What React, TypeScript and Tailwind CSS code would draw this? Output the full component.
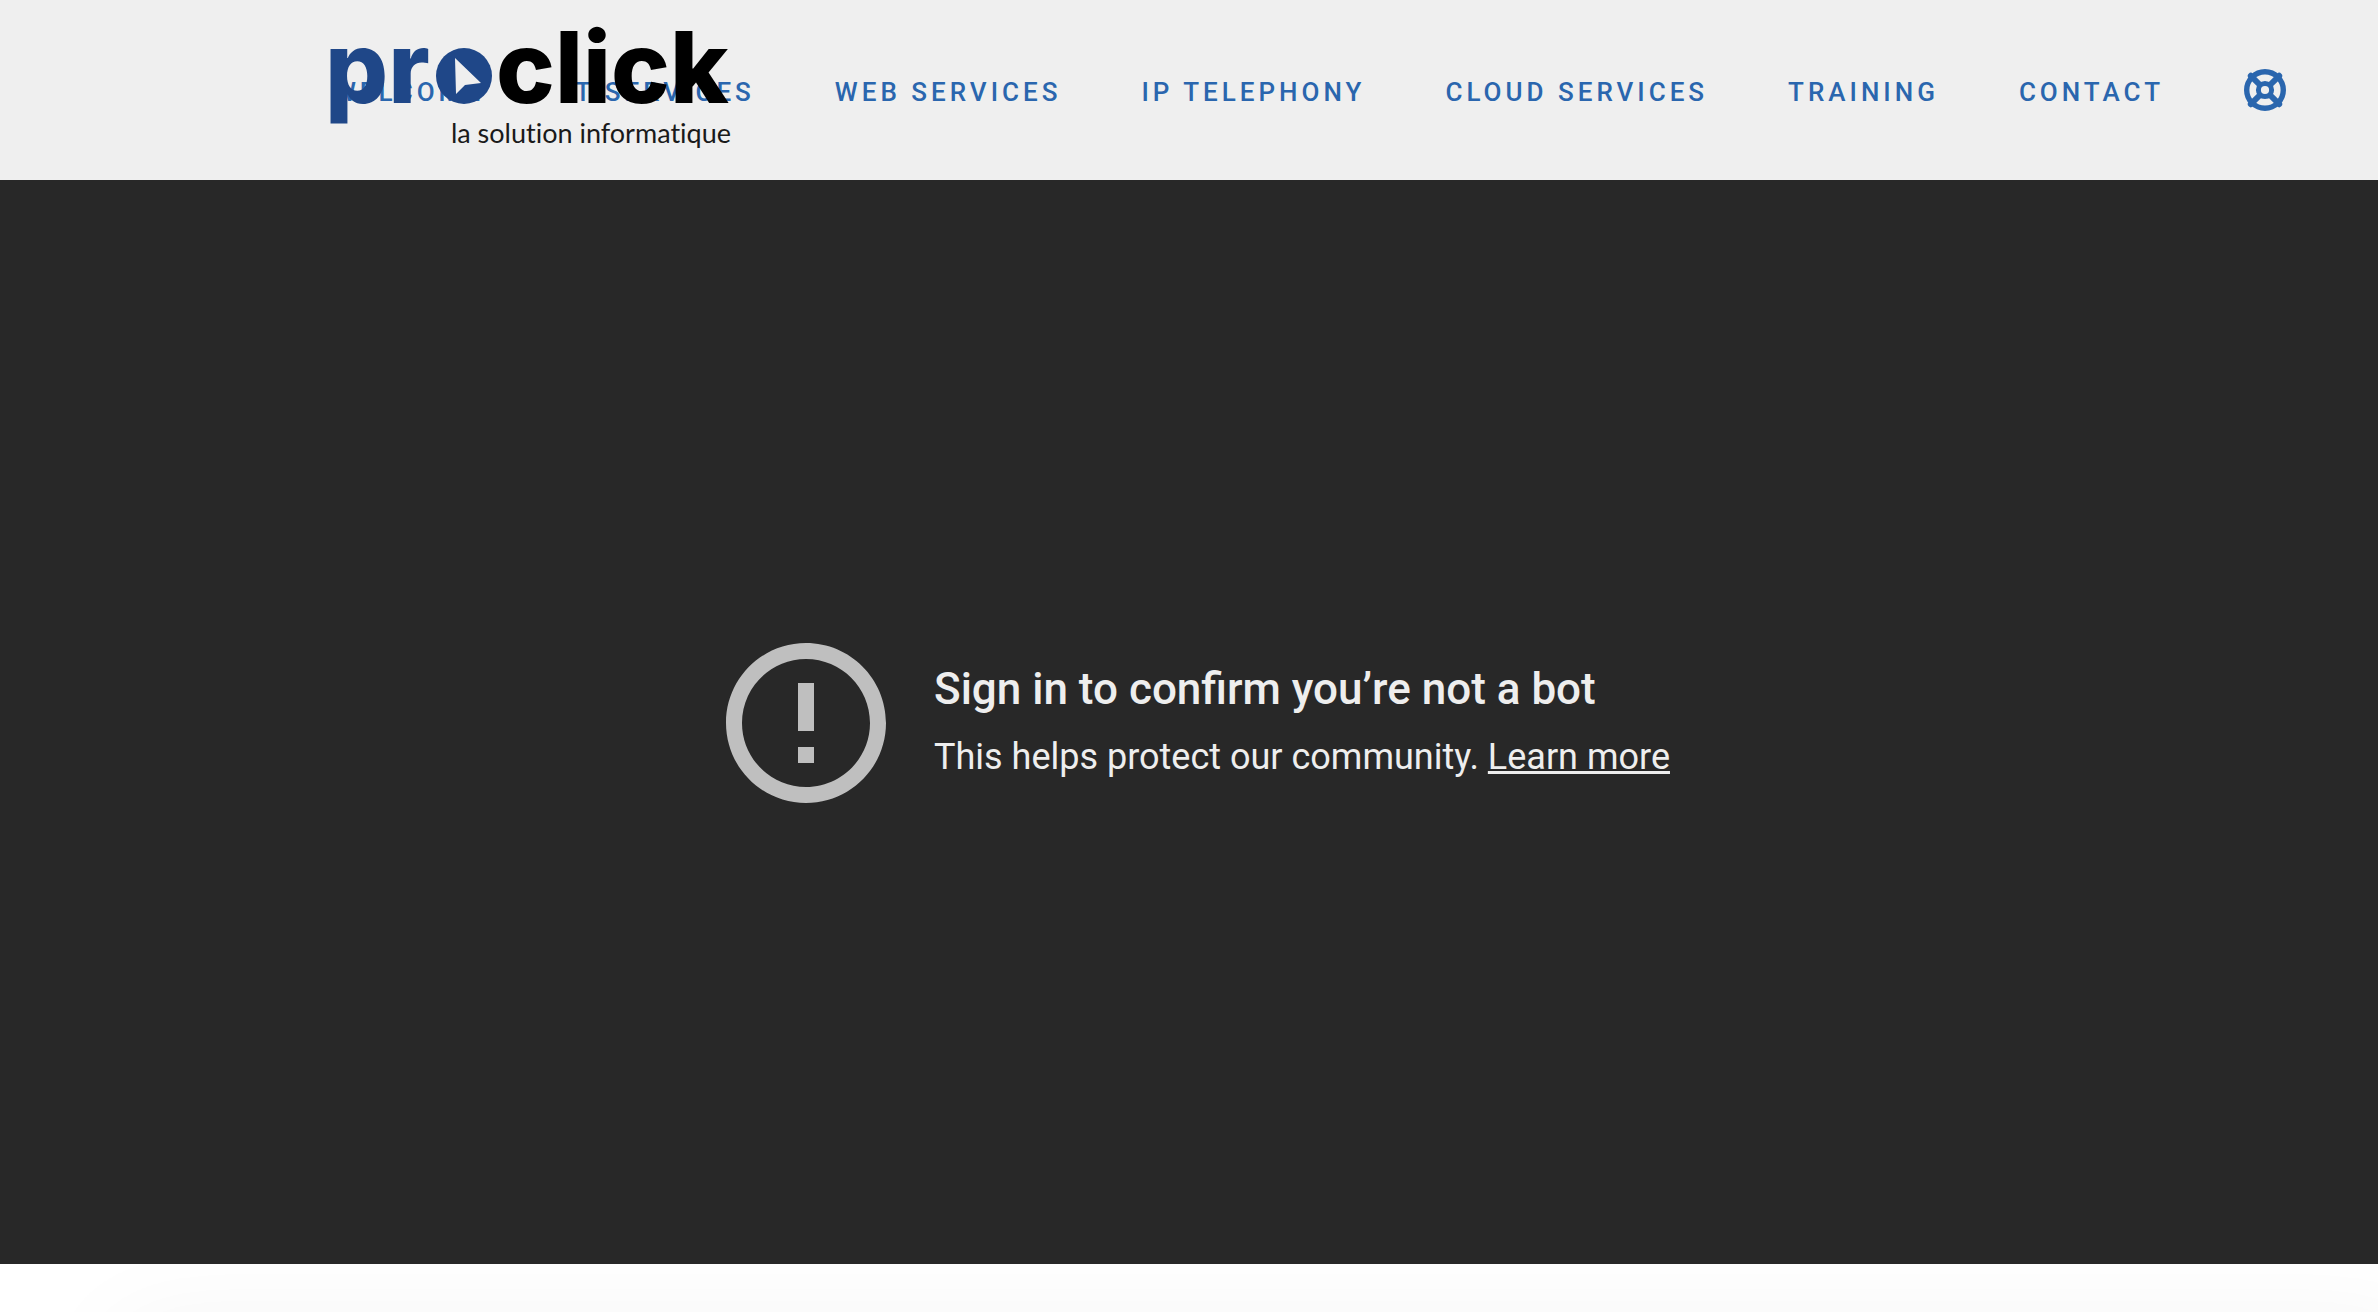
const NAV_ITEMS = [
  "Welcome",
  "IT Services",
  "Web Services",
  "IP Telephony",
  "Cloud Services",
  "Training",
  "Contact",
];

function Logo() {
  return (
    <svg viewBox="0 0 410 150" className="w-[410px] h-[150px] overflow-visible" role="img" aria-label="proclick, la solution informatique">
      <g fontFamily="Inter, sans-serif" fontSize={99} fontWeight={800}>
        <text x={-5} y={93} fill="#1f4788">pr</text>
        <text x={166} y={93} fill="#000">click</text>
      </g>
      {/* The "o": solid disc with a pointer cut out */}
      <circle cx={134} cy={66} r={28} fill="#1f4788" />
      <path d="M125 48 L151 73 L135 75 L126 84 Z" fill="#efefef" />
      <text x={401} y={133} textAnchor="end" fontFamily="Lato, sans-serif" fontSize={27} fill="#1a1a1a" className="[font-variant-ligatures:none]">
        la solution informatique
      </text>
    </svg>
  );
}

function LifeRing() {
  return (
    <svg viewBox="0 0 42 42" className="w-[42px] h-[42px]" fill="none" stroke="currentColor">
      <circle cx={21} cy={21} r={18.3} strokeWidth={5.4} />
      <circle cx={21} cy={21} r={6.6} strokeWidth={5} />
      <path d="M15 15L6.8 6.8M27 15L35.2 6.8M15 27L6.8 35.2M27 27L35.2 35.2" strokeWidth={6} strokeLinecap="round" />
    </svg>
  );
}

function Header() {
  return (
    <header className="relative flex h-[180px] items-center justify-end bg-[#efefef] pr-[92px]">
      <nav className="flex items-center gap-20 text-[26px] font-medium tracking-[4px] whitespace-nowrap text-[#2a66ae] uppercase">
        {NAV_ITEMS.map((item) => (
          <a key={item} href="#" className="pt-1">{item}</a>
        ))}
        <a href="#" aria-label="Support">
          <LifeRing />
        </a>
      </nav>
      {/* Logo floats over the first menu entries */}
      <a href="#" className="absolute top-2.5 left-[330px]">
        <Logo />
      </a>
    </header>
  );
}

function VideoError() {
  return (
    <section className="flex h-[1084px] items-center justify-center gap-8 bg-[#282828] pt-0.5 pl-0.5">
      <svg viewBox="0 0 24 24" className="size-48 shrink-0" fill="#bfbfbf">
        <path d="M11 15h2v2h-2v-2zm0-8h2v6h-2V7zm.99-5C6.47 2 2 6.48 2 12s4.47 10 9.99 10C17.52 22 22 17.52 22 12S17.52 2 11.99 2zM12 20c-4.42 0-8-3.58-8-8s3.58-8 8-8 8 3.58 8 8-3.58 8-8 8z" />
      </svg>
      <div className="text-[#eeeeee]">
        <h1 className="text-[44px] leading-[60px] font-medium">Sign in to confirm you’re not a bot</h1>
        <p className="mt-2 text-4xl leading-[60px]">
          This helps protect our community.{" "}
          <a href="#" className="underline">Learn more</a>
        </p>
      </div>
    </section>
  );
}

export default function App() {
  return (
    <div className="bg-white font-['Roboto',sans-serif]">
      <Header />
      <VideoError />
      <section className="h-12 overflow-hidden pt-16 pl-20">
        <div className="h-96 shadow-[40px_0_100px_rgba(0,0,0,0.05)]" />
      </section>
    </div>
  );
}
